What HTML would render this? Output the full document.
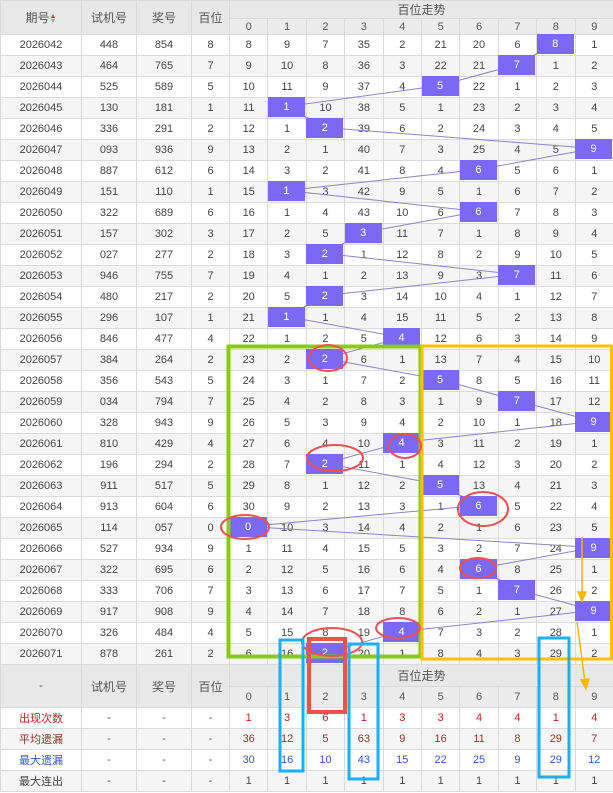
<!DOCTYPE html>
<html><head><meta charset="utf-8">
<style>
*{margin:0;padding:0;box-sizing:border-box}
body{width:613px;height:793px;overflow:hidden;background:#fff;font-family:"Liberation Sans","Noto Sans CJK SC",sans-serif;font-size:11px;color:#444;position:relative}
table{border-collapse:collapse;table-layout:fixed;position:absolute;left:0;width:613px}
td,th{border:1px solid #dadada;text-align:center;font-weight:normal;padding:0;overflow:hidden;white-space:nowrap}
th{background:#e8e8e8;color:#555;font-size:12px}
th.d{font-size:11px;background:#ececec}
tr.g td{background:#f5f5f5}
tr.sep td{border-top:1px solid #a8a8a8}
.hit{position:absolute;width:37px;height:20px;background:#7b68f5;color:#fff;text-align:center;line-height:20px;font-size:11px}
.c1{color:#b22}.c2{color:#8b3a2a}.c3{color:#3355cc}.c4{color:#444}
.arr{display:inline-block;font-size:7px;line-height:5px;vertical-align:middle}
</style></head><body>
<table id="t" style="top:0">
<colgroup><col style="width:81px"><col style="width:55px"><col style="width:55px"><col style="width:38px">
<col style="width:38.4px"><col style="width:38.4px"><col style="width:38.4px"><col style="width:38.4px"><col style="width:38.4px"><col style="width:38.4px"><col style="width:38.4px"><col style="width:38.4px"><col style="width:38.4px"><col style="width:38.4px"></colgroup>
<tr style="height:17px"><th rowspan="2">期号<span class="arr"><span style="color:#e33">▲</span><br><span style="color:#aaa">▼</span></span></th><th rowspan="2">试机号</th><th rowspan="2">奖号</th><th rowspan="2">百位</th><th colspan="10">百位走势</th></tr>
<tr style="height:16px"><th class="d">0</th><th class="d">1</th><th class="d">2</th><th class="d">3</th><th class="d">4</th><th class="d">5</th><th class="d">6</th><th class="d">7</th><th class="d">8</th><th class="d">9</th></tr>
<tbody id="b"></tbody>
</table>
<svg style="position:absolute;left:0;top:0" width="613" height="793">
<polyline fill="none" stroke="#8a84cc" stroke-width="1" points="555.4,43.5 517,64.5 440.2,85.5 286.6,106.5 325,127.5 593.8,148.5 478.6,169.5 286.6,190.5 478.6,211.5 363.4,232.5 325,253.5 517,274.5 325,295.5 286.6,316.5 401.8,337.5 325,358.5 440.2,379.5 517,400.5 593.8,421.5 401.8,442.5 325,463.5 440.2,484.5 478.6,505.5 248.2,526.5 593.8,547.5 478.6,568.5 517,589.5 593.8,610.5 401.8,631.5 325,652.5"/>
</svg>
<div id="hits"></div>
<svg style="position:absolute;left:0;top:0" width="613" height="793">
<rect x="228.5" y="346.5" width="192" height="310" fill="none" stroke="#88cc11" stroke-width="4"/>
<rect x="422" y="346" width="189.5" height="313" fill="none" stroke="#ffc000" stroke-width="3"/>
<g fill="none" stroke="#ee5050" stroke-width="2">
<ellipse cx="328" cy="358" rx="19" ry="13"/>
<ellipse cx="405" cy="446" rx="16" ry="12"/>
<ellipse cx="335" cy="458" rx="28" ry="13"/>
<ellipse cx="245" cy="527" rx="24" ry="12"/>
<ellipse cx="483" cy="509" rx="25" ry="17"/>
<ellipse cx="478" cy="568" rx="18" ry="10"/>
<ellipse cx="398" cy="628" rx="22" ry="10"/>
<ellipse cx="332" cy="642" rx="30" ry="14"/>
</g>
<rect x="309" y="639" width="36" height="73" fill="none" stroke="#f05050" stroke-width="4"/>
<g fill="none" stroke="#1ab0f5" stroke-width="3">
<rect x="280" y="640" width="23" height="131"/>
<rect x="349" y="644" width="29" height="135"/>
<rect x="539" y="638" width="30" height="139"/>
</g>
<g stroke="#f5b800" stroke-width="1.5" fill="#f5b800">
<line x1="582" y1="537" x2="582" y2="594"/><path d="M578,592 L582,601 L586,592 Z"/>
<line x1="577" y1="622" x2="585" y2="682"/><path d="M581,680 L586,689 L589,679 Z"/>
</g>
</svg>
<script>
var D=[
["2026042","448","854",8,[8,9,7,35,2,21,20,6,8,1]],
["2026043","464","765",7,[9,10,8,36,3,22,21,7,1,2]],
["2026044","525","589",5,[10,11,9,37,4,5,22,1,2,3]],
["2026045","130","181",1,[11,1,10,38,5,1,23,2,3,4]],
["2026046","336","291",2,[12,1,2,39,6,2,24,3,4,5]],
["2026047","093","936",9,[13,2,1,40,7,3,25,4,5,9]],
["2026048","887","612",6,[14,3,2,41,8,4,6,5,6,1]],
["2026049","151","110",1,[15,1,3,42,9,5,1,6,7,2]],
["2026050","322","689",6,[16,1,4,43,10,6,6,7,8,3]],
["2026051","157","302",3,[17,2,5,3,11,7,1,8,9,4]],
["2026052","027","277",2,[18,3,2,1,12,8,2,9,10,5]],
["2026053","946","755",7,[19,4,1,2,13,9,3,7,11,6]],
["2026054","480","217",2,[20,5,2,3,14,10,4,1,12,7]],
["2026055","296","107",1,[21,1,1,4,15,11,5,2,13,8]],
["2026056","846","477",4,[22,1,2,5,4,12,6,3,14,9]],
["2026057","384","264",2,[23,2,2,6,1,13,7,4,15,10]],
["2026058","356","543",5,[24,3,1,7,2,5,8,5,16,11]],
["2026059","034","794",7,[25,4,2,8,3,1,9,7,17,12]],
["2026060","328","943",9,[26,5,3,9,4,2,10,1,18,9]],
["2026061","810","429",4,[27,6,4,10,4,3,11,2,19,1]],
["2026062","196","294",2,[28,7,2,11,1,4,12,3,20,2]],
["2026063","911","517",5,[29,8,1,12,2,5,13,4,21,3]],
["2026064","913","604",6,[30,9,2,13,3,1,6,5,22,4]],
["2026065","114","057",0,[0,10,3,14,4,2,1,6,23,5]],
["2026066","527","934",9,[1,11,4,15,5,3,2,7,24,9]],
["2026067","322","695",6,[2,12,5,16,6,4,6,8,25,1]],
["2026068","333","706",7,[3,13,6,17,7,5,1,7,26,2]],
["2026069","917","908",9,[4,14,7,18,8,6,2,1,27,9]],
["2026070","326","484",4,[5,15,8,19,4,7,3,2,28,1]],
["2026071","878","261",2,[6,16,2,20,1,8,4,3,29,2]]];
var h="",hh="";
D.forEach(function(r,i){
 var cls=(i%2?"g":"")+(i%5==0&&i>0?" sep":"");
 h+='<tr class="'+cls+'" style="height:21px"><td>'+r[0]+'</td><td>'+r[1]+'</td><td>'+r[2]+'</td><td>'+r[3]+'</td>';
 r[4].forEach(function(v){h+='<td>'+v+'</td>';});
 h+='</tr>';
 hh+='<div class="hit" style="left:'+(229.5+38.4*r[3]).toFixed(1)+'px;top:'+(34+21*i)+'px">'+r[3]+'</div>';
});
h+='<tr style="height:22px"><th rowspan="2" style="font-size:11px">-</th><th rowspan="2">试机号</th><th rowspan="2">奖号</th><th rowspan="2">百位</th><th colspan="10">百位走势</th></tr><tr style="height:21px">';
for(var k=0;k<10;k++)h+='<th class="d">'+k+'</th>';
h+='</tr>';
var S=[["出现次数","c1",[1,3,6,1,3,3,4,4,1,4]],["平均遗漏","c2",[36,12,5,63,9,16,11,8,29,7]],["最大遗漏","c3",[30,16,10,43,15,22,25,9,29,12]],["最大连出","c4",[1,1,1,1,1,1,1,1,1,1]]];
S.forEach(function(s,i){
 h+='<tr class="'+(i%2?"g":"")+'" style="height:21px"><td class="'+s[1]+'">'+s[0]+'</td><td class="'+s[1]+'">-</td><td class="'+s[1]+'">-</td><td class="'+s[1]+'">-</td>';
 s[2].forEach(function(v){h+='<td class="'+s[1]+'">'+v+'</td>';});
 h+='</tr>';
});
document.getElementById("b").innerHTML=h;
document.getElementById("hits").innerHTML=hh;
</script>
</body></html>
